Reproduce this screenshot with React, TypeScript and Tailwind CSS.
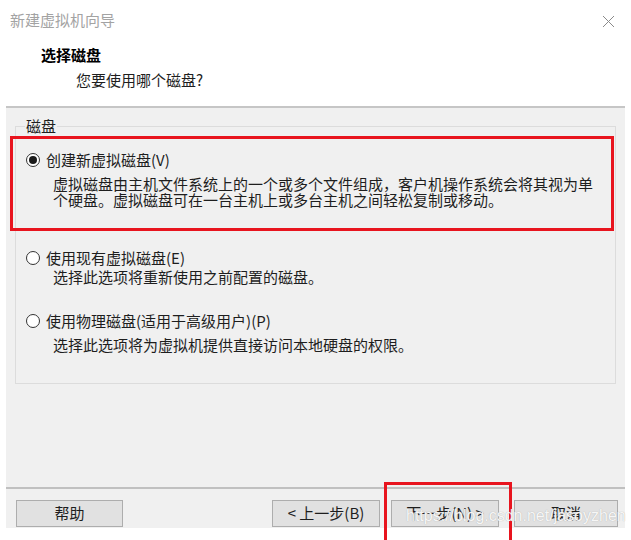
import React from "react";

const Radio = ({ checked }: { checked?: boolean }) => (
  <span className="flex h-[14px] w-[14px] shrink-0 items-center justify-center rounded-full border border-[#333333] bg-white">
    {checked && <span className="h-[8px] w-[8px] rounded-full bg-[#1a1a1a]" />}
  </span>
);

const Button = ({ label, className = "" }: { label: string; className?: string }) => (
  <div
    className={`flex h-[27px] items-center justify-center border border-[#adadad] bg-[#e1e1e1] text-[15px] text-[#1e1e1e] ${className}`}
  >
    {label}
  </div>
);

export default function App() {
  return (
    <div className="relative h-[540px] w-[631px] overflow-hidden bg-white font-['Noto_Sans_CJK_SC','Liberation_Sans',sans-serif] text-[#1e1e1e]">
      {/* title bar */}
      <div className="flex h-[40px] items-start justify-between pl-[10px] pr-[16px] pt-[11px]">
        <span className="text-[15px] leading-[18px] text-[#a3a3a3]">新建虚拟机向导</span>
        <svg width="13" height="13" viewBox="0 0 13 13" className="mt-[4px]">
          <path d="M1 1 L12 12 M12 1 L1 12" stroke="#8a8a8a" strokeWidth="1" fill="none" />
        </svg>
      </div>

      {/* page header */}
      <div className="flex h-[66px] flex-col pt-[6px]">
        <div className="pl-[41px] text-[15px] font-bold leading-[18px] text-black">选择磁盘</div>
        <div className="mt-[7px] pl-[76px] text-[15px] leading-[18px]">您要使用哪个磁盘?</div>
      </div>

      {/* body */}
      <div className="mx-[6px] flex h-[422px] flex-col border-t-2 border-[#c6c6c6] bg-[#f0f0f0]">
        <div className="relative ml-[9px] mt-[18px] h-[258px] w-[601px] border border-[#dcdcdc]">
          <span className="absolute -top-[10px] left-[9px] bg-[#f0f0f0] px-[1px] text-[15px] leading-[18px]">磁盘</span>

          {/* option 1 (annotated) */}
          <div className="-ml-[6px] mt-[9px] h-[95px] w-[604px] border-[3px] border-[#e8141e] pl-[13px] pt-[12px]">
            <div className="flex h-[18px] items-center gap-[6px] text-[15px] leading-[18px]">
              <Radio checked />
              <span>创建新虚拟磁盘(V)</span>
            </div>
            <p className="mt-[7px] w-[548px] pl-[27px] text-[15px] leading-[16px] box-content">
              虚拟磁盘由主机文件系统上的一个或多个文件组成，客户机操作系统会将其视为单个硬盘。虚拟磁盘可在一台主机上或多台主机之间轻松复制或移动。
            </p>
          </div>

          {/* option 2 */}
          <div className="mt-[18px] pl-[10px]">
            <div className="flex h-[18px] items-center gap-[6px] text-[15px] leading-[18px]">
              <Radio />
              <span>使用现有虚拟磁盘(E)</span>
            </div>
            <p className="mt-[2px] pl-[27px] text-[15px] leading-[16px]">选择此选项将重新使用之前配置的磁盘。</p>
          </div>

          {/* option 3 */}
          <div className="mt-[27px] pl-[10px]">
            <div className="flex h-[18px] items-center gap-[6px] text-[15px] leading-[18px]">
              <Radio />
              <span>使用物理磁盘(适用于高级用户)(P)</span>
            </div>
            <p className="mt-[7px] pl-[27px] text-[15px] leading-[16px]">选择此选项将为虚拟机提供直接访问本地硬盘的权限。</p>
          </div>
        </div>

        <div className="mt-[103px] h-[2px] bg-[#c0c0c0]" />

        <div className="mt-[11px] flex">
          <Button label="帮助" className="ml-[10px] w-[107px]" />
          <Button label="< 上一步(B)" className="ml-[149px] w-[108px]" />
          <Button label="下一步(N) >" className="ml-[11px] w-[108px]" />
          <Button label="取消" className="ml-[15px] w-[104px]" />
        </div>
      </div>

      {/* annotation around next button */}
      <div className="absolute left-[384px] top-[482px] h-[70px] w-[128px] border-[3px] border-[#e8141e]" />

      {/* watermark */}
      <span className="absolute left-[406px] top-[506px] font-['Liberation_Sans',sans-serif] text-[16px] leading-[20px] text-white/90 [text-shadow:0_0_1px_#a0a0a0]">
        https://blog.csdn.net/jasoyzhen
      </span>
    </div>
  );
}
